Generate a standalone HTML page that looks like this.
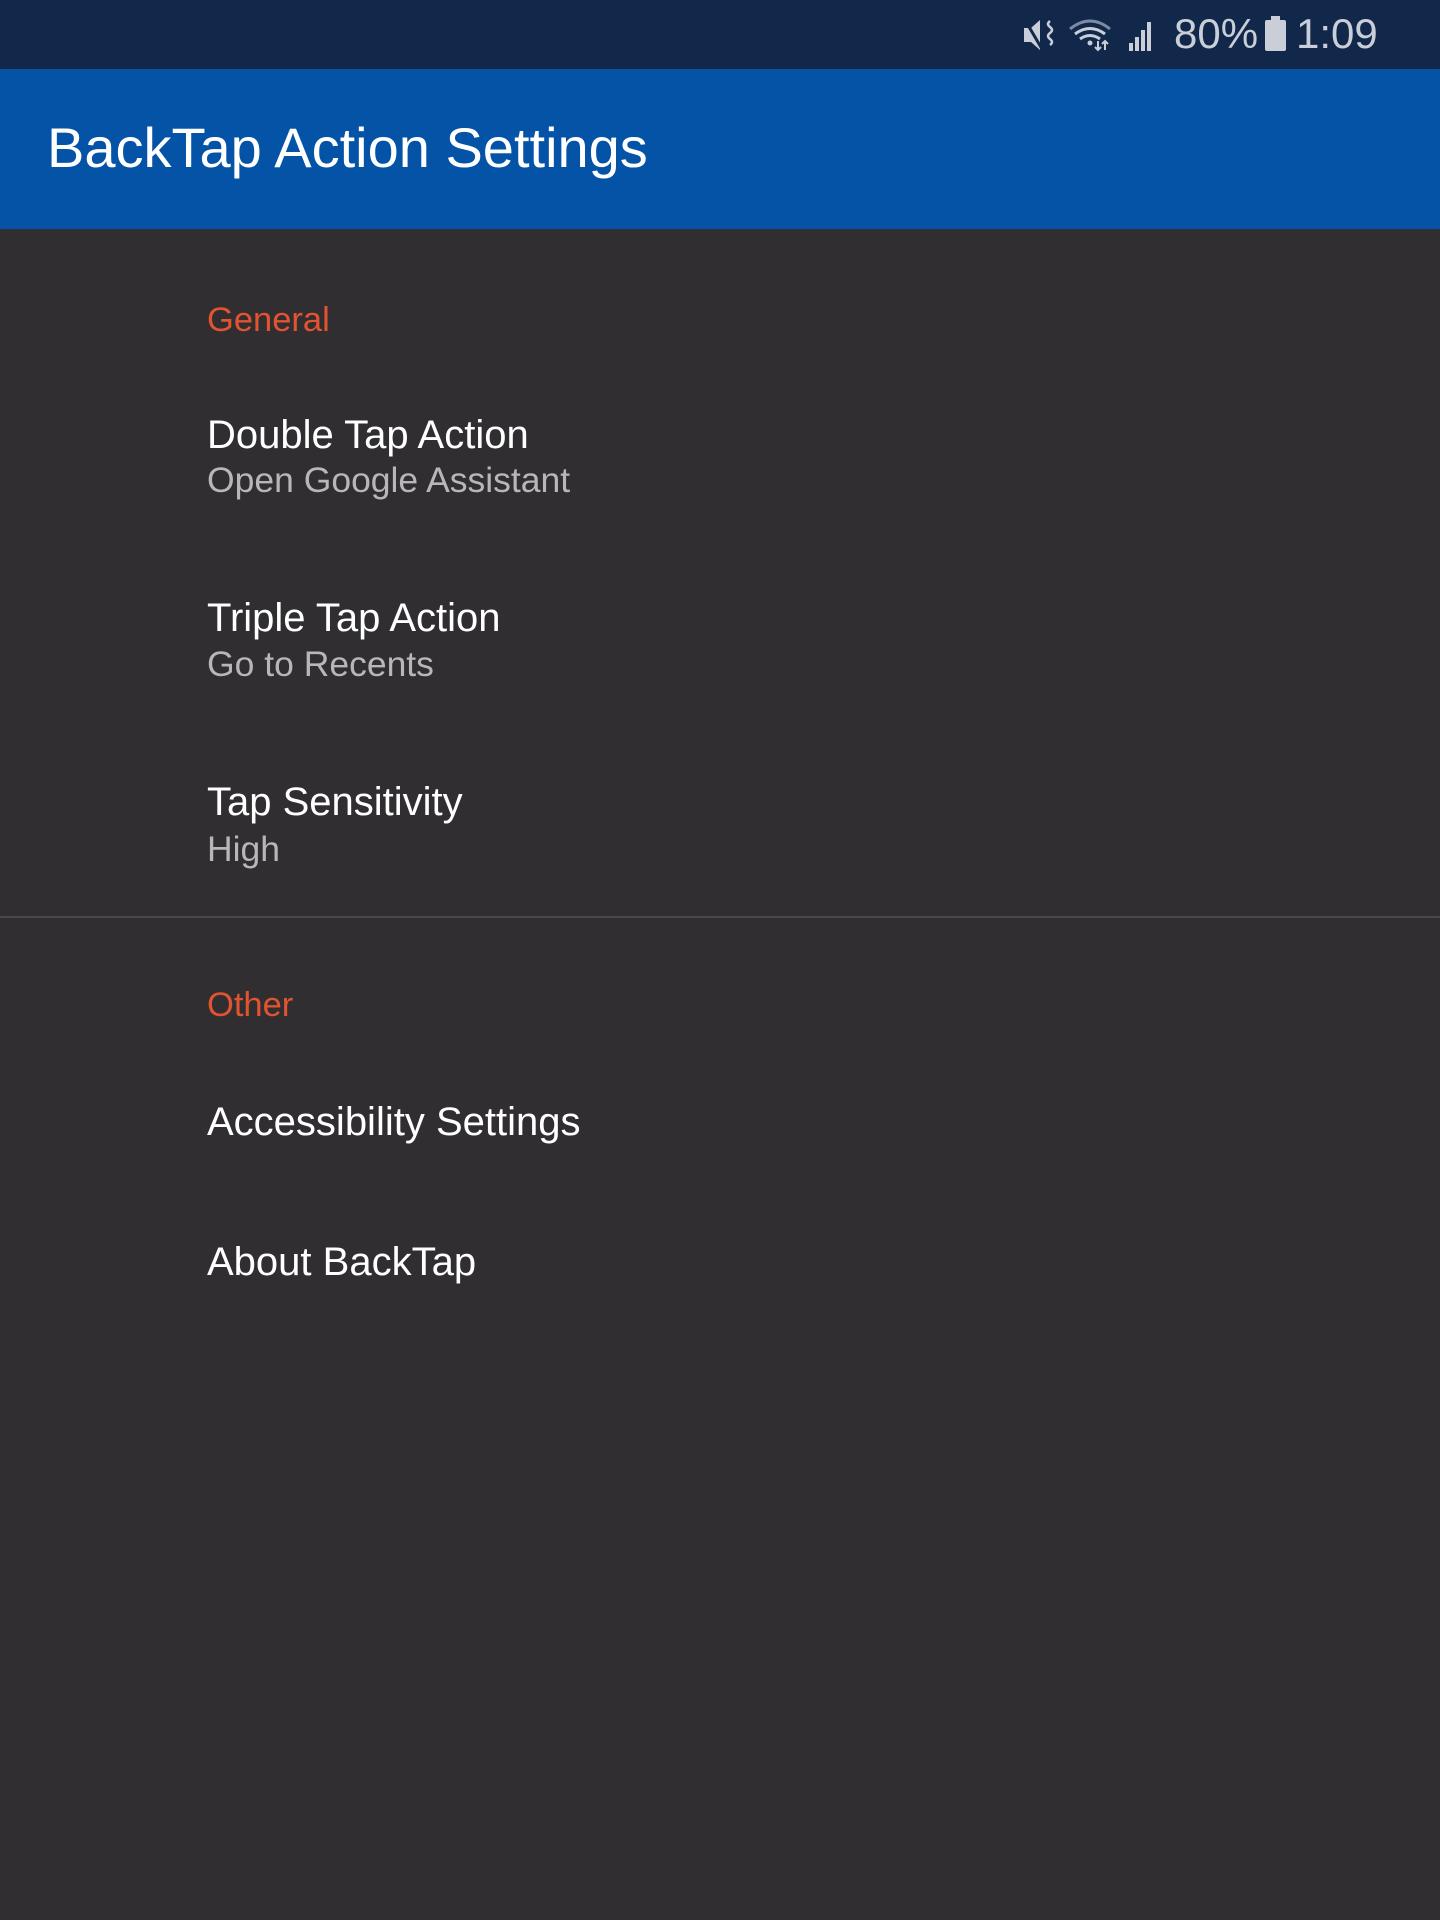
<!DOCTYPE html>
<html><head><meta charset="utf-8"><style>
*{margin:0;padding:0;box-sizing:border-box}
body{width:1440px;height:1920px;background:#302e31;font-family:"Liberation Sans",sans-serif;position:relative;overflow:hidden}
.sb{position:absolute;left:0;top:0;width:1440px;height:69px;background:#11284a}
.ab{position:absolute;left:0;top:69px;width:1440px;height:160px;background:#0453a6}
.t{position:absolute;white-space:nowrap}
.title{left:47px;top:116px;font-size:56px;color:#fff;line-height:64px}
.cat{left:207px;font-size:34.5px;color:#e1542f;line-height:40px}
.h{left:207px;font-size:40px;color:#fff;line-height:46px}
.s{left:207px;font-size:35.5px;color:#b8b6b9;line-height:42px}
.div{position:absolute;left:0;top:916px;width:1440px;height:2px;background:#4a484b}
</style></head><body>
<div class="sb">
<svg style="position:absolute;left:1020px;top:15px" width="140" height="40" viewBox="0 0 140 40">
<path d="M4 13h7l9-8v30l-9-8H4z" fill="#c9ced8"/><line x1="5" y1="5" x2="22" y2="34" stroke="#11284a" stroke-width="3"/>
<path d="M30 6q-4 3 0 6t0 6 0 6 0 6" stroke="#c9ced8" stroke-width="2.5" fill="none"/>
<path d="M50 14q20-16 40 0" stroke="#7d8aa3" stroke-width="3" fill="none"/><path d="M55 19q15-11 30 0" stroke="#c9ced8" stroke-width="3" fill="none"/><path d="M60 24q10-7 20 0" stroke="#c9ced8" stroke-width="3" fill="none"/><circle cx="70" cy="28" r="2.5" fill="#c9ced8"/>
<path d="M78 26v9m-3-3l3 3 3-3M85 35v-9m-3 3l3-3 3 3" stroke="#c9ced8" stroke-width="2" fill="none"/>
<rect x="109" y="28" width="4" height="8" fill="#c9ced8"/><rect x="115" y="22" width="4" height="14" fill="#c9ced8"/><rect x="121" y="15" width="4" height="21" fill="#c9ced8"/><rect x="127" y="7" width="4" height="29" fill="#c9ced8"/>
</svg>
<div class="t" style="left:1174px;top:10px;font-size:42px;color:#c9ced8;line-height:48px">80%</div>
<svg style="position:absolute;left:1264px;top:16px" width="24" height="36"><rect x="7" y="0" width="9" height="4" fill="#c9ced8"/><rect x="1" y="4" width="21" height="31" rx="2" fill="#c9ced8"/></svg>
<div class="t" style="left:1296px;top:10px;font-size:42px;color:#c9ced8;line-height:48px">1:09</div>
</div>
<div class="ab"></div>
<div class="t title">BackTap Action Settings</div>
<div class="t cat" style="top:300px">General</div>
<div class="t h" style="top:412px">Double Tap Action</div>
<div class="t s" style="top:459px">Open Google Assistant</div>
<div class="t h" style="top:595px">Triple Tap Action</div>
<div class="t s" style="top:643px">Go to Recents</div>
<div class="t h" style="top:779px">Tap Sensitivity</div>
<div class="t s" style="top:828px">High</div>
<div class="div"></div>
<div class="t cat" style="top:985px">Other</div>
<div class="t h" style="top:1099px">Accessibility Settings</div>
<div class="t h" style="top:1239px">About BackTap</div>
</body></html>
